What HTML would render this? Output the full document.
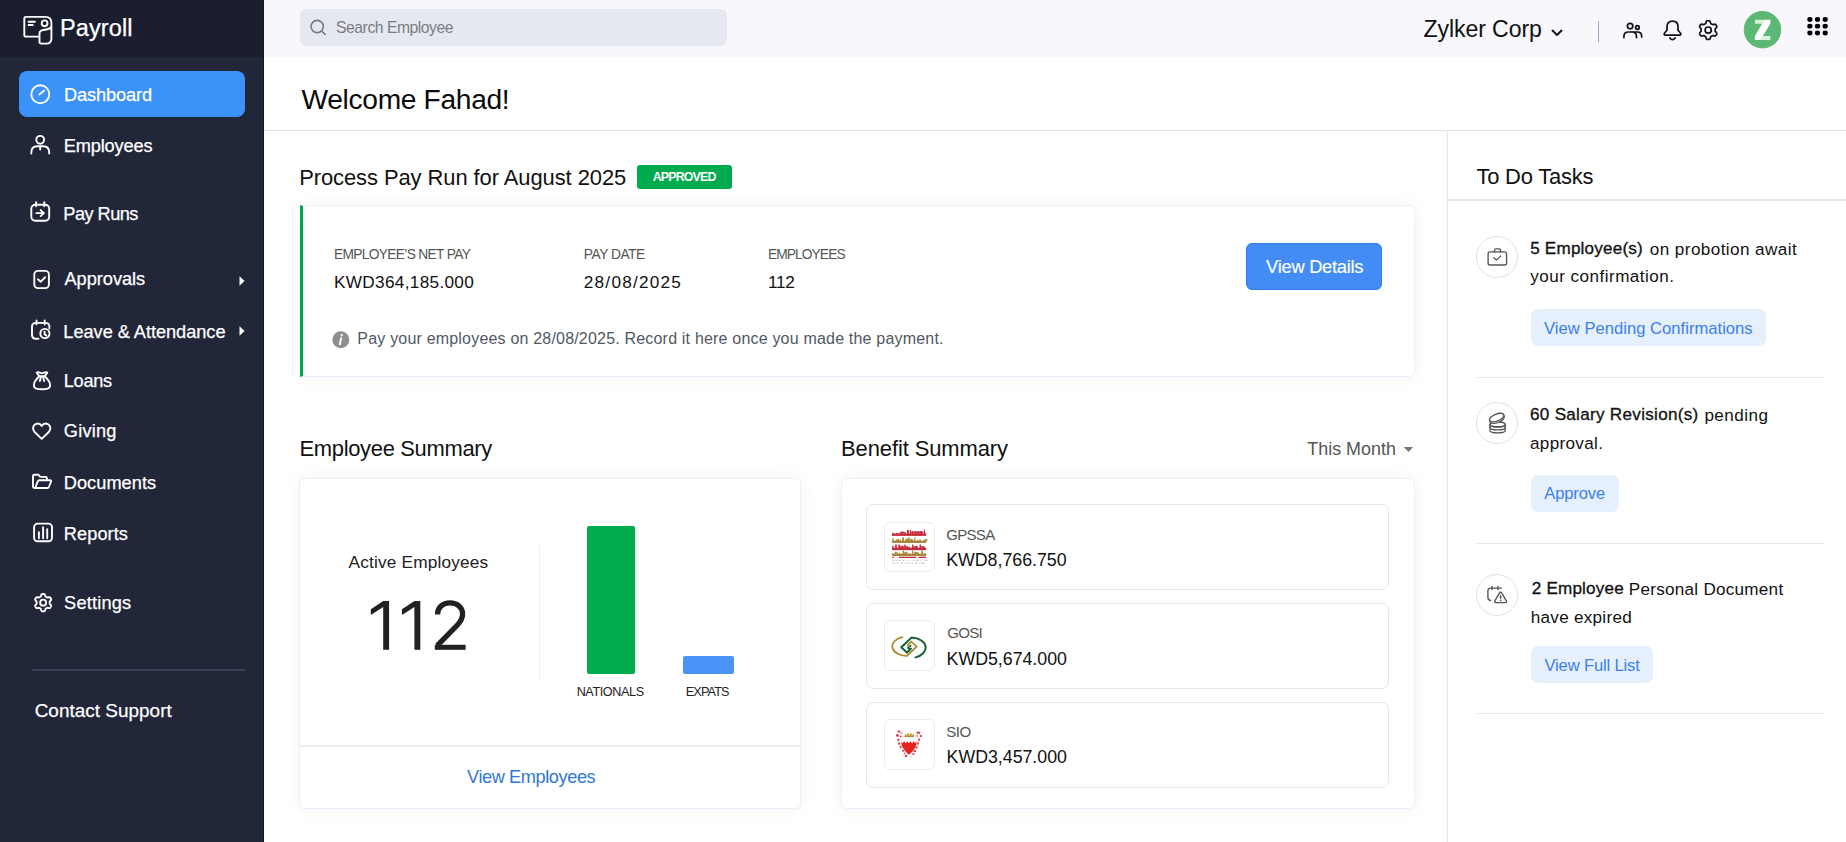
<!DOCTYPE html>
<html><head><meta charset="utf-8">
<style>
*{box-sizing:border-box;margin:0;padding:0}
html,body{width:1846px;height:842px;overflow:hidden;background:#fff;font-family:"Liberation Sans",sans-serif;}
.a{position:absolute}
.t{position:absolute;line-height:1;white-space:nowrap}
svg{position:absolute;overflow:visible}
#side{left:0;top:0;width:264px;height:842px;background:#222639;border-right:1px solid #0f1322}
#sidehd{left:0;top:0;width:263px;height:57px;background:#1b1e2f}
.nav{color:#fff;font-size:17.6px;-webkit-text-stroke:0.25px #fff}
#hdr{left:264px;top:0;width:1582px;height:57px;background:#f7f7fc}
.card{background:#fff;border:1px solid #eceff9;border-radius:5px;box-shadow:0 0 18px rgba(30,40,90,0.05)}
.lbl{font-size:13.2px;color:#555;letter-spacing:-0.35px}
.val{font-size:16.8px;color:#111;letter-spacing:0.5px}
.ttl{font-size:21.4px;color:#111}
.item{background:#fff;border:1.5px solid #e7e7ea;border-radius:7px}
.logo{background:#fff;border:1px solid #ececef;border-radius:6px}
.bname{font-size:14px;color:#555;letter-spacing:0.2px}
.bval{font-size:16.8px;color:#111;letter-spacing:0.43px}
.task{font-size:16.3px;color:#111;line-height:28px;white-space:nowrap;position:absolute}
.tk{font-size:17.1px;color:#111}
.tbtn{background:#e6f0fd;border-radius:7px}
.tbt{font-size:16.2px;color:#3a80ec;letter-spacing:0.3px}
.circ{border:1px solid #e2e2e2;border-radius:50%;width:42px;height:42px}
.div{background:#e8e8e8;height:1px}
</style></head>
<body>
<!-- SIDEBAR -->
<div id="side" class="a"></div>
<div id="sidehd" class="a"></div>
<svg width="40" height="40" style="left:15px;top:8px" viewBox="15 8 40 40" fill="none" stroke="#fff" stroke-width="1.9" stroke-linecap="round" stroke-linejoin="round">
  <path d="M39.5,36.6 L26,36.6 Q24.3,36.6 24.3,34.9 L24.3,18.6 Q24.3,16.9 26,16.9 L45.4,16.9 Q51.4,16.9 51.4,23 L51.4,38.5 Q51.4,43.6 46.3,43.6 L41.3,43.6 Q39.5,43.6 39.5,41.8 L39.5,33 C39.5,30.5 42,30.2 45,29.8 C48.5,29.3 50.6,28.3 51.4,26.5"/>
  <circle cx="44.6" cy="23.3" r="2.9"/>
  <path d="M28.6,21.8 L34.9,21.8 M28.6,25 L32.8,25"/>
</svg>
<div class="t" style="left:60.04px;top:17.12px;font-size:23.50px;letter-spacing:0.092px;color:#fff;-webkit-text-stroke:0.25px #fff">Payroll</div>

<div class="a" style="left:19px;top:71px;width:226px;height:46px;background:#3b92f8;border-radius:8px"></div>
<svg width="30" height="30" style="left:25px;top:79px" viewBox="25 79 30 30" fill="none" stroke="#fff" stroke-width="1.9" stroke-linecap="round" stroke-linejoin="round">
  <circle cx="40.3" cy="94.2" r="9"/><path d="M39.4,94.4 L44.2,90.6"/>
</svg>
<div class="t nav" style="left:64.04px;top:85.80px;font-size:18.20px;letter-spacing:-0.120px">Dashboard</div>

<svg width="30" height="30" style="left:25px;top:131px" viewBox="25 131 30 30" fill="none" stroke="#fff" stroke-width="1.9" stroke-linecap="round" stroke-linejoin="round">
  <circle cx="40.2" cy="139.8" r="3.9"/><path d="M31.3,153.6 L31.3,152.5 Q31.3,146.3 37.5,146.3 L43,146.3 Q49.2,146.3 49.2,152.5 L49.2,153.6 M40.2,146.6 L40.2,149.6"/>
</svg>
<div class="t nav" style="left:63.84px;top:136.63px;font-size:18.20px;letter-spacing:-0.165px">Employees</div>

<svg width="30" height="30" style="left:26px;top:198px" viewBox="26 198 30 30" fill="none" stroke="#fff" stroke-width="1.9" stroke-linecap="round" stroke-linejoin="round">
  <rect x="31.3" y="204.7" width="17.9" height="16" rx="4"/><path d="M36.1,202.3 L36.1,206.2 M44.3,202.3 L44.3,206.2 M36.3,213.1 L44,213.1 M40.6,210.1 L43.8,213.1 L40.6,216.1"/>
</svg>
<div class="t nav" style="left:63.37px;top:205.04px;font-size:18.20px;letter-spacing:-0.551px">Pay Runs</div>

<svg width="30" height="30" style="left:26px;top:264px" viewBox="26 264 30 30" fill="none" stroke="#fff" stroke-width="1.9" stroke-linecap="round" stroke-linejoin="round">
  <rect x="34.3" y="270.9" width="14.6" height="17.2" rx="3.6"/><path d="M37.9,279.3 L40.6,281.7 L45.2,277.3"/>
</svg>
<div class="t nav" style="left:64.41px;top:270.44px;font-size:18.20px;letter-spacing:-0.008px">Approvals</div>
<svg width="8" height="12" style="left:238px;top:275px" viewBox="0 0 8 12"><path d="M1.5,1.3 L6.6,6 L1.5,10.7Z" fill="#fff"/></svg>

<svg width="30" height="30" style="left:26px;top:316px" viewBox="26 316 30 30" fill="none" stroke="#fff" stroke-width="1.9" stroke-linecap="round" stroke-linejoin="round">
  <path d="M38.5,338.7 L36,338.7 Q32,338.7 32,334.7 L32,326.9 Q32,322.9 36,322.9 L45.4,322.9 Q49.4,322.9 49.4,326.9 L49.4,328.3 M36.5,320.4 L36.5,324.3 M44.7,320.4 L44.7,324.3"/>
  <circle cx="44.9" cy="333.5" r="4.6"/><path d="M44.6,331.6 L44.6,334.2 L46.3,335.6"/>
</svg>
<div class="t nav" style="left:63.35px;top:322.61px;font-size:18.20px;letter-spacing:-0.038px">Leave &amp; Attendance</div>
<svg width="8" height="12" style="left:238px;top:324.5px" viewBox="0 0 8 12"><path d="M1.5,1.3 L6.6,6 L1.5,10.7Z" fill="#fff"/></svg>

<svg width="30" height="30" style="left:26px;top:366px" viewBox="26 366 30 30" fill="none" stroke="#fff" stroke-width="1.9" stroke-linecap="round" stroke-linejoin="round">
  <path d="M39.3,376.2 C35.6,379.6 33.6,383 33.9,385.8 C34.2,388.6 36.6,389.3 42,389.3 C47.4,389.3 49.8,388.6 50.1,385.8 C50.4,383 48.4,379.6 44.7,376.2 Z"/>
  <path d="M39.3,376.2 L36.7,372.6 C38,371.2 40.4,373.3 42,373.3 C43.6,373.3 46,371.2 47.3,372.6 L44.7,376.2"/>
  <path d="M41,376.6 L39.9,381 M43,376.6 L44.1,381"/>
</svg>
<div class="t nav" style="left:63.73px;top:372.21px;font-size:18.20px;letter-spacing:-0.285px">Loans</div>

<svg width="30" height="30" style="left:26px;top:416px" viewBox="0 0 30 30" fill="none" stroke="#fff" stroke-width="1.9" stroke-linecap="round" stroke-linejoin="round">
  <path d="M15.7,22.9 L8.6,16 C6.3,13.7 6.6,10 9.3,8.3 C11.7,6.9 14.3,7.8 15.7,9.9 C17.1,7.8 19.7,6.9 22.1,8.3 C24.8,10 25.1,13.7 22.8,16 Z"/>
</svg>
<div class="t nav" style="left:63.78px;top:422.24px;font-size:18.20px;letter-spacing:0.226px">Giving</div>

<svg width="30" height="30" style="left:26px;top:467px" viewBox="0 0 30 30" fill="none" stroke="#fff" stroke-width="1.9" stroke-linecap="round" stroke-linejoin="round">
  <path d="M8.4,21 C7.5,21 7,20.4 7,19.5 L7,9 C7,8.2 7.6,7.7 8.4,7.7 L12.4,7.7 L14.3,9.9 L19.6,9.9 C20.4,9.9 20.9,10.5 20.9,11.3 L20.9,13.2"/>
  <path d="M9.2,21 L11.7,14.4 C11.9,13.7 12.5,13.3 13.2,13.3 L24.2,13.3 C24.9,13.3 25.3,13.9 25.1,14.5 L22.9,20 C22.7,20.6 22.1,21 21.4,21 Z"/>
</svg>
<div class="t nav" style="left:63.76px;top:473.62px;font-size:18.20px;letter-spacing:0.042px">Documents</div>

<svg width="30" height="30" style="left:26px;top:518px" viewBox="0 0 30 30" fill="none" stroke="#fff" stroke-width="1.9" stroke-linecap="round" stroke-linejoin="round">
  <rect x="8.1" y="5.6" width="17.9" height="17.7" rx="3.6"/><path d="M12.9,14.2 L12.9,20.2 M17.1,9.2 L17.1,20.2 M21.2,11.2 L21.2,20.2"/>
</svg>
<div class="t nav" style="left:63.75px;top:524.92px;font-size:18.20px;letter-spacing:0.089px">Reports</div>

<svg width="30" height="30" style="left:26px;top:588px" viewBox="0 0 30 30" fill="none" stroke="#fff" stroke-width="1.9" stroke-linecap="round" stroke-linejoin="round">
  <path id="g6" d="M23.65,14.65 L23.65,14.37 L23.65,14.08 L23.66,13.79 L23.75,13.49 L24.00,13.13 L24.49,12.68 L24.95,12.19 L25.14,11.74 L25.12,11.35 L25.02,10.98 L24.86,10.63 L24.68,10.30 L24.48,9.98 L24.26,9.67 L24.00,9.40 L23.66,9.18 L23.18,9.12 L22.52,9.28 L21.89,9.47 L21.46,9.52 L21.15,9.44 L20.89,9.31 L20.64,9.16 L20.40,9.02 L20.15,8.88 L19.91,8.74 L19.66,8.58 L19.44,8.36 L19.26,7.96 L19.12,7.31 L18.92,6.66 L18.63,6.28 L18.28,6.09 L17.91,6.00 L17.53,5.96 L17.15,5.95 L16.77,5.96 L16.39,6.00 L16.02,6.09 L15.67,6.28 L15.38,6.66 L15.18,7.31 L15.04,7.96 L14.86,8.36 L14.64,8.58 L14.39,8.74 L14.15,8.88 L13.90,9.02 L13.66,9.16 L13.41,9.31 L13.15,9.44 L12.84,9.52 L12.41,9.47 L11.78,9.28 L11.12,9.12 L10.64,9.18 L10.30,9.40 L10.04,9.67 L9.82,9.98 L9.62,10.30 L9.44,10.63 L9.28,10.98 L9.18,11.35 L9.16,11.74 L9.35,12.19 L9.81,12.68 L10.30,13.13 L10.55,13.49 L10.64,13.79 L10.65,14.08 L10.65,14.37 L10.65,14.65 L10.65,14.93 L10.65,15.22 L10.64,15.51 L10.55,15.81 L10.30,16.17 L9.81,16.62 L9.35,17.11 L9.16,17.56 L9.18,17.95 L9.28,18.32 L9.44,18.67 L9.62,19.00 L9.82,19.32 L10.04,19.63 L10.30,19.90 L10.64,20.12 L11.12,20.18 L11.78,20.02 L12.41,19.83 L12.84,19.78 L13.15,19.86 L13.41,19.99 L13.66,20.14 L13.90,20.28 L14.15,20.42 L14.39,20.56 L14.64,20.72 L14.86,20.94 L15.04,21.34 L15.18,21.99 L15.38,22.64 L15.67,23.02 L16.02,23.21 L16.39,23.30 L16.77,23.34 L17.15,23.35 L17.53,23.34 L17.91,23.30 L18.28,23.21 L18.63,23.02 L18.92,22.64 L19.12,21.99 L19.26,21.34 L19.44,20.94 L19.66,20.72 L19.91,20.56 L20.15,20.42 L20.40,20.28 L20.64,20.14 L20.89,19.99 L21.15,19.86 L21.46,19.78 L21.89,19.83 L22.52,20.02 L23.18,20.18 L23.66,20.12 L24.00,19.90 L24.26,19.63 L24.48,19.32 L24.68,19.00 L24.86,18.67 L25.02,18.32 L25.12,17.95 L25.14,17.56 L24.95,17.11 L24.49,16.62 L24.00,16.17 L23.75,15.81 L23.66,15.51 L23.65,15.22 L23.65,14.93Z"/>
  <circle cx="17.15" cy="14.65" r="3"/>
</svg>
<div class="t nav" style="left:64.09px;top:593.94px;font-size:18.20px;letter-spacing:0.182px">Settings</div>

<div class="a" style="left:32px;top:669px;width:213px;height:2px;background:#3d4156"></div>
<div class="t" style="left:34.68px;top:702.01px;font-size:18.90px;letter-spacing:0.038px;color:#fff;-webkit-text-stroke:0.25px #fff">Contact Support</div>

<!-- HEADER -->
<div id="hdr" class="a"></div>
<div class="a" style="left:300px;top:9px;width:427px;height:37px;background:#e5e8f0;border-radius:6px"></div>
<svg width="20" height="20" style="left:308px;top:18px" viewBox="308 18 20 20" fill="none" stroke="#777a80" stroke-width="1.6" stroke-linecap="round">
  <circle cx="317.2" cy="26.5" r="6.1"/><path d="M321.6,31 L325,34.4"/>
</svg>
<div class="t" style="left:336.08px;top:19.90px;font-size:15.70px;letter-spacing:-0.458px;color:#7b7c82">Search Employee</div>

<div class="t" style="left:1423.47px;top:17.82px;font-size:23.10px;letter-spacing:-0.093px;color:#111">Zylker Corp</div>
<svg width="14" height="10" style="left:1550px;top:28px" viewBox="1550 28 14 10" fill="none" stroke="#111" stroke-width="1.9" stroke-linecap="round" stroke-linejoin="round"><path d="M1552.5,30.5 L1557,35 L1561.5,30.5"/></svg>
<div class="a" style="left:1597.5px;top:21px;width:1.6px;height:21px;background:#9ea3c2"></div>

<svg width="30" height="30" style="left:1618px;top:14px" viewBox="0 0 30 30" fill="none" stroke="#111" stroke-width="1.7" stroke-linecap="round" stroke-linejoin="round">
  <circle cx="12.1" cy="12.1" r="2.7"/><circle cx="19.4" cy="13.5" r="1.8"/>
  <path d="M5.9,23.6 L5.9,22.5 Q5.9,18 10.4,18 L14.2,18 Q18.5,18 18.5,22.5 L18.5,23.6 M15,18 L19.4,18 Q23.7,18 23.7,22.5 L23.7,23"/>
</svg>
<svg width="30" height="30" style="left:1658px;top:14px" viewBox="0 0 30 30" fill="none" stroke="#111" stroke-width="1.7" stroke-linecap="round" stroke-linejoin="round">
  <path d="M9,16.3 L9,12.8 Q9,7.2 14.5,7.2 Q20,7.2 20,12.8 L20,16.3 L22.6,19.3 Q23.5,21.1 21.6,21.1 L7.4,21.1 Q5.5,21.1 6.4,19.3 Z"/>
  <path d="M11.8,23.9 Q14.5,27.5 17.2,23.9"/>
</svg>
<svg width="30" height="30" style="left:1694px;top:14px" viewBox="0 0 30 30" fill="none" stroke="#111" stroke-width="1.7" stroke-linecap="round" stroke-linejoin="round">
  <path id="g7" d="M21.20,16.10 L21.20,15.79 L21.20,15.49 L21.21,15.18 L21.30,14.85 L21.58,14.46 L22.10,13.98 L22.59,13.46 L22.79,12.97 L22.77,12.55 L22.65,12.16 L22.49,11.78 L22.30,11.43 L22.08,11.08 L21.84,10.75 L21.56,10.45 L21.20,10.23 L20.68,10.16 L19.98,10.32 L19.30,10.53 L18.84,10.58 L18.51,10.49 L18.23,10.35 L17.96,10.19 L17.70,10.04 L17.43,9.89 L17.17,9.74 L16.91,9.56 L16.67,9.32 L16.47,8.89 L16.32,8.20 L16.10,7.51 L15.79,7.10 L15.41,6.90 L15.01,6.81 L14.61,6.76 L14.20,6.75 L13.79,6.76 L13.39,6.81 L12.99,6.90 L12.61,7.10 L12.30,7.51 L12.08,8.20 L11.93,8.89 L11.73,9.32 L11.49,9.56 L11.23,9.74 L10.97,9.89 L10.70,10.04 L10.44,10.19 L10.17,10.35 L9.89,10.49 L9.56,10.58 L9.10,10.53 L8.42,10.32 L7.72,10.16 L7.20,10.23 L6.84,10.45 L6.56,10.75 L6.32,11.08 L6.10,11.42 L5.91,11.78 L5.75,12.16 L5.63,12.55 L5.61,12.97 L5.81,13.46 L6.30,13.98 L6.82,14.46 L7.10,14.85 L7.19,15.18 L7.20,15.49 L7.20,15.79 L7.20,16.10 L7.20,16.41 L7.20,16.71 L7.19,17.02 L7.10,17.35 L6.82,17.74 L6.30,18.22 L5.81,18.74 L5.61,19.23 L5.63,19.65 L5.75,20.04 L5.91,20.42 L6.10,20.78 L6.32,21.12 L6.56,21.45 L6.84,21.75 L7.20,21.97 L7.72,22.04 L8.42,21.88 L9.10,21.67 L9.56,21.62 L9.89,21.71 L10.17,21.85 L10.44,22.01 L10.70,22.16 L10.97,22.31 L11.23,22.46 L11.49,22.64 L11.73,22.88 L11.93,23.31 L12.08,24.00 L12.30,24.69 L12.61,25.10 L12.99,25.30 L13.39,25.39 L13.79,25.44 L14.20,25.45 L14.61,25.44 L15.01,25.39 L15.41,25.30 L15.79,25.10 L16.10,24.69 L16.32,24.00 L16.47,23.31 L16.67,22.88 L16.91,22.64 L17.17,22.46 L17.43,22.31 L17.70,22.16 L17.96,22.01 L18.23,21.85 L18.51,21.71 L18.84,21.62 L19.30,21.67 L19.98,21.88 L20.68,22.04 L21.20,21.97 L21.56,21.75 L21.84,21.45 L22.08,21.12 L22.30,20.77 L22.49,20.42 L22.65,20.04 L22.77,19.65 L22.79,19.23 L22.59,18.74 L22.10,18.22 L21.58,17.74 L21.30,17.35 L21.21,17.02 L21.20,16.71 L21.20,16.41Z"/>
  <circle cx="14.2" cy="16.1" r="3.1"/>
</svg>
<div class="a" style="left:1743.5px;top:10.8px;width:38px;height:38px;border-radius:50%;background:#fff"></div>
<svg width="44" height="44" style="left:1740px;top:8px" viewBox="0 0 44 44">
  <circle cx="22.5" cy="21.7" r="18.3" fill="#5cb874" stroke="#4caf63" stroke-width="0.8"/>
  <path d="M14.9,11.75 L24.5,11.75 L22.1,15.7 L14.9,15.7Z M23,28 L30.3,28 L30.3,31.9 L20.5,31.9Z" fill="#d3f6dc"/>
  <path d="M24.5,11.75 L30.3,11.75 L30.3,15.7 L20.5,31.9 L14.9,31.9 L14.9,28 Z" fill="#fff"/>
</svg>
<svg width="36" height="36" style="left:1800px;top:10px" viewBox="0 0 36 36" fill="#000">
  <ellipse cx="9.9" cy="9.5" rx="2.6" ry="2.4"/><ellipse cx="17.5" cy="9.5" rx="2.6" ry="2.4"/><ellipse cx="25.2" cy="9.5" rx="2.6" ry="2.4"/>
  <ellipse cx="9.9" cy="16.2" rx="2.6" ry="2.4"/><ellipse cx="17.5" cy="16.2" rx="2.6" ry="2.4"/><ellipse cx="25.2" cy="16.2" rx="2.6" ry="2.4"/>
  <ellipse cx="9.9" cy="23" rx="2.6" ry="2.4"/><ellipse cx="17.5" cy="23" rx="2.6" ry="2.4"/><ellipse cx="25.2" cy="23" rx="2.6" ry="2.4"/>
</svg>

<!-- WELCOME -->
<div class="t" style="left:301.52px;top:84.94px;font-size:28.20px;letter-spacing:-0.336px;color:#0a0a0a">Welcome Fahad!</div>
<div class="a" style="left:264px;top:130px;width:1582px;height:1px;background:#e2e2e4"></div>

<!-- RIGHT PANEL -->
<div class="a" style="left:1447px;top:131px;width:1px;height:711px;background:#e6e6e8"></div>
<div class="a" style="left:1448px;top:199px;width:398px;height:1.5px;background:#e6e6e8"></div>
<div class="t ttl" style="left:1476.40px;top:166.45px;font-size:21.95px;letter-spacing:-0.188px">To Do Tasks</div>

<!-- PAY RUN -->
<div class="t ttl" style="left:299.14px;top:166.91px;font-size:21.95px;letter-spacing:-0.071px">Process Pay Run for August 2025</div>
<div class="a" style="left:637px;top:165px;width:95px;height:24px;background:#00aa4f;border-radius:3px"></div>
<div class="t" style="left:652.78px;top:170.99px;font-size:12.35px;letter-spacing:-0.819px;font-weight:bold;color:#fff">APPROVED</div>

<div class="a card" style="left:300px;top:205px;width:1115px;height:171.5px;border-left:3px solid #00a84d;border-radius:0 5px 5px 0"></div>
<div class="t lbl" style="left:333.98px;top:248.29px;font-size:13.80px;letter-spacing:-0.695px">EMPLOYEE’S NET PAY</div>
<div class="t val" style="left:333.99px;top:274.43px;font-size:17.20px;letter-spacing:0.319px">KWD364,185.000</div>
<div class="t lbl" style="left:583.78px;top:248.29px;font-size:13.80px;letter-spacing:-0.495px">PAY DATE</div>
<div class="t val" style="left:583.79px;top:274.43px;font-size:17.20px;letter-spacing:1.234px">28/08/2025</div>
<div class="t lbl" style="left:767.95px;top:248.29px;font-size:13.80px;letter-spacing:-0.930px">EMPLOYEES</div>
<div class="t val" style="left:767.97px;top:274.43px;font-size:17.20px;letter-spacing:-0.250px">112</div>
<svg width="20" height="20" style="left:331px;top:330px" viewBox="0 0 20 20">
  <circle cx="9.8" cy="9.8" r="8.5" fill="#8f8f8f"/>
  <path d="M10.8,5.2 L10.8,5.3" stroke="#fff" stroke-width="2.2" stroke-linecap="round"/>
  <path d="M10.1,8.2 L8.9,14.3" stroke="#fff" stroke-width="2" stroke-linecap="round"/>
</svg>
<div class="t" style="left:357.37px;top:331.47px;font-size:16.00px;letter-spacing:0.192px;color:#4f5964">Pay your employees on 28/08/2025. Record it here once you made the payment.</div>
<div class="a" style="left:1246.4px;top:243.2px;width:136px;height:47px;background:#438cf6;border:1px solid #2f7ff0;border-radius:6px"></div>
<div class="t" style="left:1266.09px;top:258.33px;font-size:18.30px;letter-spacing:-0.262px;color:#fff;-webkit-text-stroke:0.15px #fff">View Details</div>

<!-- EMPLOYEE SUMMARY -->
<div class="t ttl" style="left:299.46px;top:438.26px;font-size:21.95px;letter-spacing:-0.311px">Employee Summary</div>
<div class="a card" style="left:299px;top:478px;width:502px;height:330.5px"></div>
<div class="a" style="left:300px;top:745px;width:500px;height:1.5px;background:#ececf0"></div>
<div class="t" style="left:348.59px;top:553.82px;font-size:17.30px;letter-spacing:0.154px;color:#222">Active Employees</div>
<svg width="110" height="60" style="left:360px;top:595px" viewBox="360 595 110 60">
  <path fill="#212121" d="M383.2,601 L389.1,601 L389.1,649.8 L383.2,649.8 L383.2,606.9 L370.8,614.9 L370.8,609.2 Z"/>
  <path fill="#212121" d="M414.4,601 L420.3,601 L420.3,649.8 L414.4,649.8 L414.4,606.9 L402,614.9 L402,609.2 Z"/>
  <path fill="none" stroke="#212121" stroke-width="5.3" d="M437.6,614.4 C437.6,607.5 442.6,602.9 450,602.9 C457.4,602.9 462.6,607.4 462.6,614 C462.6,618.6 460.6,621.6 457.2,625.2 L437.2,645.6"/>
  <rect x="434.8" y="644.8" width="30.8" height="5" fill="#212121"/>
</svg>
<div class="a" style="left:539px;top:545px;width:1px;height:135px;background:#f1f1f3"></div>
<div class="a" style="left:586.5px;top:526px;width:48.5px;height:148px;background:#00ab4e;border-radius:2px"></div>
<div class="a" style="left:683px;top:655.5px;width:50.5px;height:18.5px;background:#4b92f6;border-radius:2px"></div>
<div class="t" style="left:576.65px;top:685.84px;font-size:12.65px;letter-spacing:-0.406px;color:#222">NATIONALS</div>
<div class="t" style="left:685.78px;top:685.84px;font-size:12.65px;letter-spacing:-0.857px;color:#222">EXPATS</div>
<div class="t" style="left:467.08px;top:767.59px;font-size:18.20px;letter-spacing:-0.424px;color:#2f78d3">View Employees</div>

<!-- BENEFIT SUMMARY -->
<div class="t ttl" style="left:841.06px;top:438.05px;font-size:21.95px;letter-spacing:-0.093px">Benefit Summary</div>
<div class="t" style="left:1307.20px;top:441.22px;font-size:17.90px;letter-spacing:0.031px;color:#555">This Month</div>
<svg width="12" height="8" style="left:1403px;top:446px" viewBox="0 0 12 8"><path d="M0.8,1 L10.2,1 L5.5,6Z" fill="#777"/></svg>
<div class="a card" style="left:841px;top:478px;width:573.5px;height:330.5px"></div>

<div class="a item" style="left:866px;top:503.5px;width:522.5px;height:86px"></div>
<div class="a logo" style="left:884px;top:521.5px;width:50.5px;height:50.5px"></div>
<svg width="50" height="50" style="left:884px;top:521px" viewBox="0 0 50 50">
<g fill="#c7283b"><rect x="8.2" y="12.50" width="34" height="2.3"/><rect x="8.20" y="11.85" width="1.50" height="2.95"/><rect x="12.10" y="11.85" width="1.50" height="2.95"/><rect x="15.00" y="11.85" width="1.20" height="2.95"/><rect x="16.20" y="10.67" width="2.80" height="1.8"/><rect x="17.60" y="11.26" width="1.20" height="3.54"/><rect x="18.80" y="10.67" width="1.50" height="1.8"/><rect x="19.80" y="11.26" width="1.80" height="3.54"/><rect x="23.00" y="8.90" width="1.80" height="5.90"/><rect x="25.80" y="8.90" width="1.20" height="5.90"/><rect x="27.00" y="10.67" width="1.50" height="1.8"/><rect x="28.00" y="10.08" width="1.50" height="4.72"/><rect x="29.50" y="10.67" width="1.50" height="1.8"/><rect x="30.90" y="10.08" width="1.80" height="4.72"/><rect x="32.70" y="10.67" width="2.80" height="1.8"/><rect x="33.70" y="10.08" width="1.50" height="4.72"/><rect x="35.20" y="10.67" width="2.80" height="1.8"/><rect x="36.20" y="10.08" width="1.80" height="4.72"/><rect x="38.00" y="10.67" width="1.50" height="1.8"/><rect x="39.90" y="8.90" width="1.20" height="5.90"/></g>
<g fill="#a8873a"><rect x="8.2" y="19.70" width="34" height="2.3"/><rect x="8.20" y="17.52" width="1.50" height="4.48"/><rect x="11.60" y="18.64" width="1.20" height="3.36"/><rect x="12.80" y="18.08" width="2.20" height="1.8"/><rect x="15.20" y="18.64" width="1.50" height="3.36"/><rect x="18.10" y="16.40" width="1.80" height="5.60"/><rect x="21.30" y="17.52" width="1.50" height="4.48"/><rect x="22.80" y="18.08" width="1.50" height="1.8"/><rect x="23.80" y="16.40" width="1.80" height="5.60"/><rect x="25.60" y="18.08" width="2.80" height="1.8"/><rect x="27.50" y="18.64" width="1.80" height="3.36"/><rect x="30.30" y="16.40" width="1.20" height="5.60"/><rect x="32.90" y="18.64" width="1.20" height="3.36"/><rect x="35.10" y="18.64" width="1.80" height="3.36"/><rect x="38.80" y="19.20" width="1.80" height="2.80"/><rect x="40.60" y="18.08" width="2.80" height="1.8"/></g>
<g fill="#c7283b"><rect x="8.2" y="26.80" width="34" height="2.3"/><rect x="8.20" y="24.70" width="1.50" height="4.40"/><rect x="11.10" y="23.60" width="1.80" height="5.50"/><rect x="14.30" y="23.60" width="1.80" height="5.50"/><rect x="16.10" y="25.25" width="2.80" height="1.8"/><rect x="17.50" y="24.70" width="1.80" height="4.40"/><rect x="19.30" y="25.25" width="1.50" height="1.8"/><rect x="20.30" y="23.60" width="1.50" height="5.50"/><rect x="21.80" y="25.25" width="2.20" height="1.8"/><rect x="24.20" y="25.80" width="1.80" height="3.30"/><rect x="27.90" y="23.60" width="1.50" height="5.50"/><rect x="29.40" y="25.25" width="2.80" height="1.8"/><rect x="31.80" y="24.70" width="1.80" height="4.40"/><rect x="35.50" y="23.60" width="1.80" height="5.50"/><rect x="37.30" y="25.25" width="2.80" height="1.8"/><rect x="39.20" y="25.80" width="1.80" height="3.30"/></g>
<g fill="#a8873a"><rect x="8.2" y="32.70" width="34" height="2.3"/><rect x="8.20" y="32.30" width="1.20" height="2.70"/><rect x="10.80" y="30.68" width="1.50" height="4.32"/><rect x="12.30" y="31.22" width="1.50" height="1.8"/><rect x="14.70" y="31.76" width="1.50" height="3.24"/><rect x="18.60" y="29.60" width="1.50" height="5.40"/><rect x="20.10" y="31.22" width="2.20" height="1.8"/><rect x="22.00" y="30.68" width="1.50" height="4.32"/><rect x="24.90" y="32.30" width="1.20" height="2.70"/><rect x="28.00" y="29.60" width="1.20" height="5.40"/><rect x="30.20" y="30.68" width="1.80" height="4.32"/><rect x="32.00" y="31.22" width="2.20" height="1.8"/><rect x="33.40" y="31.76" width="1.50" height="3.24"/><rect x="37.30" y="29.60" width="1.80" height="5.40"/><rect x="40.10" y="32.30" width="1.80" height="2.70"/></g>
<g fill="#c7283b"><rect x="8.2" y="35.7" width="1.6" height="1.3"/><rect x="15" y="35.7" width="17" height="1.3"/><rect x="34.8" y="35.7" width="7.4" height="1.3"/></g>
<g fill="#8d8d8d" opacity=".55"><rect x="8.00" y="38.8" width="1.80" height="1.1"/><rect x="11.20" y="38.8" width="1.80" height="1.1"/><rect x="14.40" y="38.8" width="1.80" height="1.1"/><rect x="18.40" y="38.8" width="1.80" height="1.1"/><rect x="22.40" y="38.8" width="0.80" height="1.1"/><rect x="24.60" y="38.8" width="0.80" height="1.1"/><rect x="27.60" y="38.8" width="0.80" height="1.1"/><rect x="29.20" y="38.8" width="0.80" height="1.1"/><rect x="31.40" y="38.8" width="1.20" height="1.1"/><rect x="33.40" y="38.8" width="1.20" height="1.1"/><rect x="36.80" y="38.8" width="0.80" height="1.1"/><rect x="39.80" y="38.8" width="0.80" height="1.1"/><rect x="41.40" y="38.8" width="1.80" height="1.1"/><rect x="8.00" y="41.5" width="1.20" height="1.1"/><rect x="10.40" y="41.5" width="0.80" height="1.1"/><rect x="12.40" y="41.5" width="0.80" height="1.1"/><rect x="13.80" y="41.5" width="0.80" height="1.1"/><rect x="16.60" y="41.5" width="2.40" height="1.1"/><rect x="20.20" y="41.5" width="0.80" height="1.1"/><rect x="21.60" y="41.5" width="0.80" height="1.1"/><rect x="23.00" y="41.5" width="0.80" height="1.1"/><rect x="24.40" y="41.5" width="0.80" height="1.1"/><rect x="25.80" y="41.5" width="1.20" height="1.1"/><rect x="28.20" y="41.5" width="0.80" height="1.1"/><rect x="31.00" y="41.5" width="2.40" height="1.1"/><rect x="35.40" y="41.5" width="0.80" height="1.1"/><rect x="36.80" y="41.5" width="2.40" height="1.1"/><rect x="39.80" y="41.5" width="1.20" height="1.1"/></g>
</svg>
<div class="t bname" style="left:946.19px;top:526.60px;font-size:15.10px;letter-spacing:-0.751px">GPSSA</div>
<div class="t bval" style="left:946.15px;top:552.02px;font-size:17.80px;letter-spacing:-0.009px">KWD8,766.750</div>

<div class="a item" style="left:866px;top:602.5px;width:522.5px;height:86px"></div>
<div class="a logo" style="left:884px;top:620px;width:50.5px;height:50.5px"></div>
<svg width="50" height="50" style="left:884px;top:620px" viewBox="0 0 50 50" fill="none" stroke-linecap="round" stroke-linejoin="round">
  <path d="M18.4,17.2 C11,18.8 7.6,23.5 8.4,27.5 C9.4,32.5 15.5,35.6 22.6,36 L32.7,26.7 L27.3,21.5 L23.6,25.3" stroke="#a8882a" stroke-width="1.7"/>
  <path d="M31.5,37.4 C38.5,35.6 42.2,31 41.6,26.7 C41,21.8 35.6,18 27.5,17.6 L17.3,27.3 L22.9,32.4 L27,28.6" stroke="#12602e" stroke-width="2"/>
  <path d="M26.7,25.6 L23.9,27.8 L25.7,29.4" stroke="#12602e" stroke-width="1.7"/>
</svg>
<div class="t bname" style="left:947.29px;top:624.78px;font-size:15.10px;letter-spacing:-0.769px">GOSI</div>
<div class="t bval" style="left:946.57px;top:650.63px;font-size:17.80px;letter-spacing:-0.022px">KWD5,674.000</div>

<div class="a item" style="left:866px;top:701.5px;width:522.5px;height:86px"></div>
<div class="a logo" style="left:884px;top:719px;width:50.5px;height:50.5px"></div>
<svg width="50" height="50" style="left:884px;top:719px" viewBox="0 0 50 50">
  <g fill="#d9282b" opacity=".85">
    <ellipse cx="15" cy="12.6" rx="1.7" ry="1.1"/><ellipse cx="13.4" cy="16.4" rx="1.5" ry="1.3"/><ellipse cx="16.6" cy="17.4" rx="1.2" ry="1"/>
    <ellipse cx="34.4" cy="13.8" rx="2" ry="1.3"/><ellipse cx="36.8" cy="16.9" rx="1.1" ry="1.2"/><ellipse cx="33.2" cy="17" rx="1" ry="0.8"/>
    <ellipse cx="14.4" cy="20.8" rx="1" ry="1.6"/><ellipse cx="15.2" cy="24.4" rx="1" ry="1.5"/><ellipse cx="16.6" cy="28" rx="1" ry="1.4"/>
    <ellipse cx="35" cy="20.8" rx="0.9" ry="1.7"/><ellipse cx="34" cy="24.6" rx="1" ry="1.4"/><ellipse cx="32.6" cy="28.4" rx="1.1" ry="1.2"/>
    <ellipse cx="19" cy="31.8" rx="1.1" ry="1.1"/><ellipse cx="30.6" cy="32.2" rx="1.5" ry="1.1"/><ellipse cx="29.4" cy="35.2" rx="1.2" ry="0.9"/>
    <ellipse cx="22" cy="37" rx="1.3" ry="1.3"/><ellipse cx="20.4" cy="34.4" rx="0.8" ry="0.9"/><ellipse cx="17.4" cy="14.2" rx="1" ry="0.7"/>
  </g>
  <g fill="#b5dbe1" opacity=".75">
    <ellipse cx="17.8" cy="14.8" rx="1.5" ry="0.8"/><ellipse cx="32" cy="16.2" rx="1.5" ry="0.8"/><ellipse cx="16" cy="26.4" rx="0.7" ry="1.3"/><ellipse cx="34.2" cy="27" rx="0.7" ry="1.2"/><ellipse cx="26.4" cy="37.4" rx="1.3" ry="0.8"/><ellipse cx="18" cy="21.6" rx="0.6" ry="1"/>
  </g>
  <path d="M17.4,17.8 L32.6,17.8 L32.6,24 C32.6,28.6 28.6,32.4 24.9,35.8 C21.2,32.4 17.4,28.6 17.4,24 Z" fill="#e3231f"/>
  <path d="M17.2,17.6 L32.8,17.6 L32.8,22.2 L31.3,24.3 L29.7,22.2 L28.1,24.3 L26.5,22.2 L24.9,24.3 L23.3,22.2 L21.7,24.3 L20.1,22.2 L18.6,24.3 L17.2,22.2 Z" fill="#fff"/>
  <path d="M20.6,18 L20.8,14.4 L22.4,15.9 L23.9,13.6 L25.4,15.9 L26.9,13.6 L28.4,15.9 L29.9,14.4 L30.1,18 Z" fill="#c9a23e"/>
  <rect x="20.6" y="17.2" width="9.5" height="0.9" fill="#8a7a50" opacity=".6"/>
</svg>
<div class="t bname" style="left:946.21px;top:723.99px;font-size:15.10px;letter-spacing:-0.436px">SIO</div>
<div class="t bval" style="left:946.56px;top:749.34px;font-size:17.80px;letter-spacing:-0.020px">KWD3,457.000</div>

<!-- TASKS -->
<div class="a circ" style="left:1476px;top:236.3px"></div>
<svg width="46" height="46" style="left:1474px;top:234px" viewBox="0 0 46 46" fill="none" stroke="#555" stroke-width="1.35" stroke-linecap="round" stroke-linejoin="round">
  <rect x="14.1" y="17.9" width="18.5" height="13.1" rx="2"/>
  <path d="M20.5,17.9 L20.5,16.2 Q20.5,14.8 21.9,14.8 L25.1,14.8 Q26.5,14.8 26.5,16.2 L26.5,17.9"/>
  <path d="M19.9,23.7 L22.4,26.1 L26.6,22.1" stroke-width="1.25"/>
</svg>
<div class="t tk" style="left:1530.20px;top:239.50px;font-size:17.10px;letter-spacing:0.200px;-webkit-text-stroke:0.32px #111">5 Employee(s)</div>
<div class="t tk" style="left:1649.80px;top:240.50px;font-size:17.10px;letter-spacing:0.424px">on probotion await</div>
<div class="t tk" style="left:1530.20px;top:268.00px;font-size:17.10px;letter-spacing:0.470px">your confirmation.</div>
<div class="a tbtn" style="left:1530.5px;top:308.8px;width:235px;height:37.5px"></div>
<div class="t tbt" style="left:1544.00px;top:320.57px;font-size:16.57px;letter-spacing:0.035px">View Pending Confirmations</div>
<div class="a div" style="left:1476px;top:376.5px;width:348px"></div>

<div class="a circ" style="left:1476px;top:402.3px"></div>
<svg width="46" height="46" style="left:1474px;top:400px" viewBox="0 0 46 46" fill="#fff" stroke="#555" stroke-width="1.35" stroke-linecap="round" stroke-linejoin="round">
  <path d="M16,24.4 L16,30.4 A7.6,2.4 0 0 0 31.2,30.4 L31.2,24.4 Z"/>
  <ellipse cx="23.6" cy="24.4" rx="7.6" ry="2.4"/>
  <path d="M16,27.4 A7.6,2.4 0 0 0 31.2,27.4" fill="none"/>
  <path d="M16,24.6 A7.6,2.4 0 0 0 31.2,24.6" fill="none"/>
  <path d="M15.65,20.45 L16.15,22.05 A7.6,3.5 -22 0 0 30.25,16.35 L29.75,14.75 Z" stroke-width="1.2"/>
  <ellipse cx="22.7" cy="17.6" rx="7.6" ry="3.5" transform="rotate(-22 22.7 17.6)"/>
</svg>
<div class="t tk" style="left:1530.00px;top:406.00px;font-size:17.10px;letter-spacing:0.290px;-webkit-text-stroke:0.32px #111">60 Salary Revision(s)</div>
<div class="t tk" style="left:1704.40px;top:407.00px;font-size:17.10px;letter-spacing:0.467px">pending</div>
<div class="t tk" style="left:1530.00px;top:435.00px;font-size:17.10px;letter-spacing:0.325px">approval.</div>
<div class="a tbtn" style="left:1530.5px;top:474.8px;width:88.5px;height:37.5px"></div>
<div class="t tbt" style="left:1544.21px;top:485.99px;font-size:16.57px;letter-spacing:-0.112px">Approve</div>
<div class="a div" style="left:1476px;top:542.5px;width:348px"></div>

<div class="a circ" style="left:1476.3px;top:573.8px"></div>
<svg width="46" height="46" style="left:1474px;top:572px" viewBox="0 0 46 46" fill="none" stroke="#555" stroke-width="1.4" stroke-linecap="round" stroke-linejoin="round">
  <path d="M16.6,28.5 Q13.9,28.3 13.9,25.6 L13.9,18.8 Q13.9,16.1 16.6,16.1 L27.6,16.1 M18.1,14.5 L18.1,17.6 M24,14.5 L24,17.6"/>
  <path d="M25.3,21.3 Q26.6,19.2 27.9,21.3 L32.2,28.7 Q33.3,30.6 31.1,30.6 L22.1,30.6 Q19.9,30.6 21,28.7 Z"/>
  <path d="M26.6,23.9 L26.6,26.2" stroke-width="1.6"/><circle cx="26.6" cy="28.3" r="0.85" fill="#555" stroke="none"/>
</svg>
<div class="t tk" style="left:1531.80px;top:580.00px;font-size:17.10px;letter-spacing:0.178px;-webkit-text-stroke:0.32px #111">2 Employee</div>
<div class="t tk" style="left:1628.80px;top:581.00px;font-size:17.10px;letter-spacing:0.263px">Personal Document</div>
<div class="t tk" style="left:1530.80px;top:608.50px;font-size:17.10px;letter-spacing:0.272px">have expired</div>
<div class="a tbtn" style="left:1530.8px;top:645.8px;width:122.5px;height:37.5px"></div>
<div class="t tbt" style="left:1544.41px;top:657.78px;font-size:16.57px;letter-spacing:-0.139px">View Full List</div>
<div class="a div" style="left:1476px;top:713px;width:348px"></div>

</body></html>
